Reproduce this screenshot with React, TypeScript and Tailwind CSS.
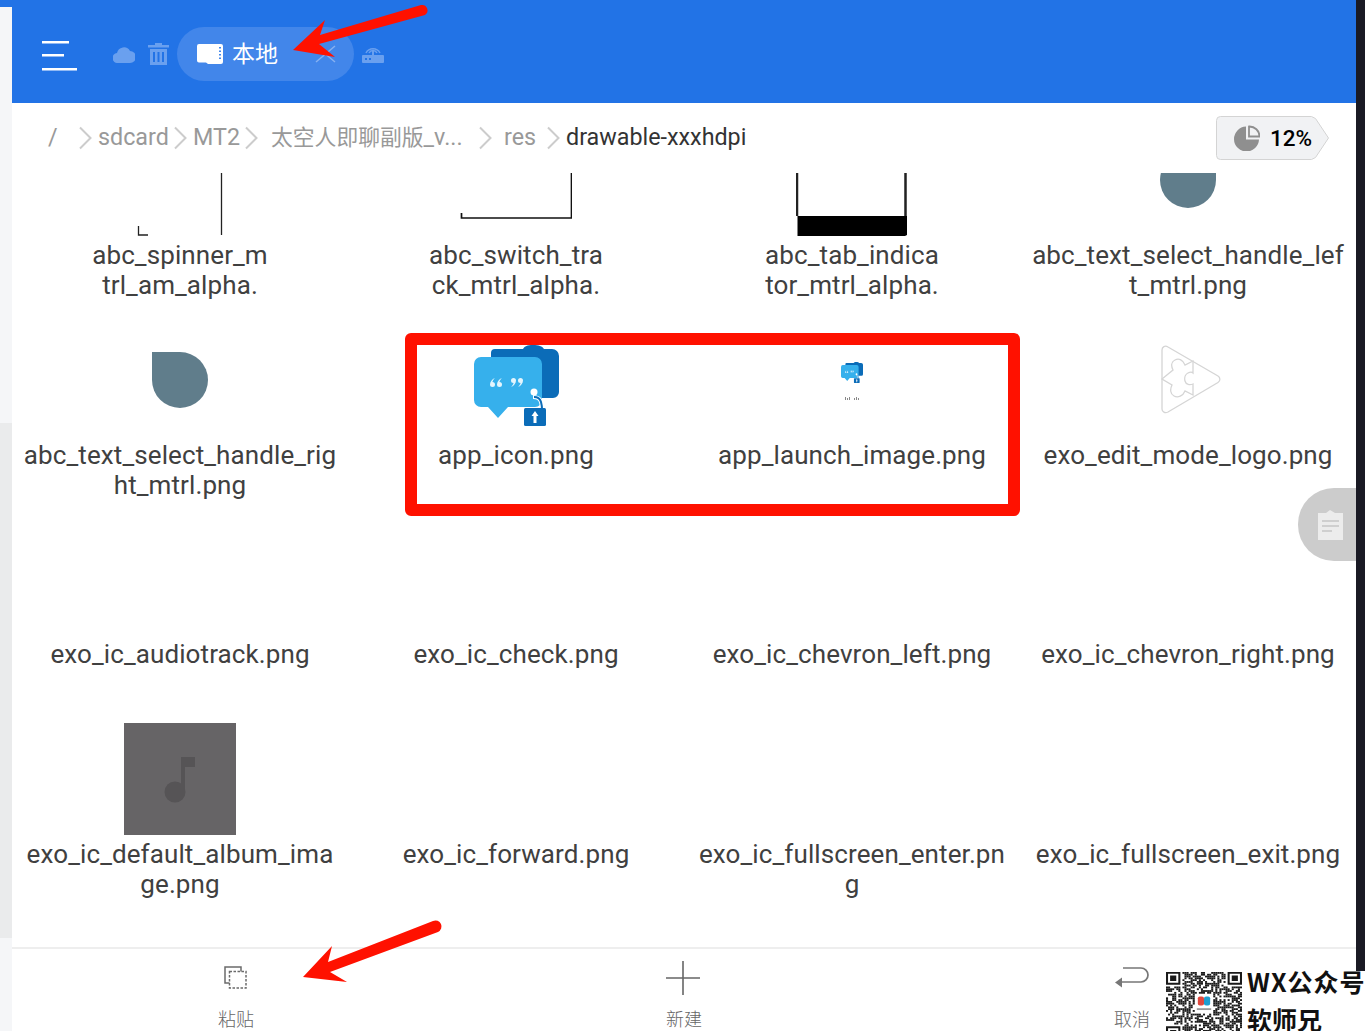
const qrCells = (() => {
  const cells: [number, number][] = [];
  let seed = 73;
  for (let y = 0; y < 37; y++) {
    for (let x = 0; x < 37; x++) {
      seed = (seed * 137 + 41) % 1009;
      const inFinder = (x < 8 && y < 8) || (x > 28 && y < 8) || (x < 8 && y > 28);
      const inLogo = x > 13 && x < 23 && y > 11 && y < 23;
      if (!inFinder && !inLogo && seed % 5 < 3) cells.push([x, y]);
    }
  }
  return cells;
})();

const ChevronRight = ({ className }: { className: string }) => (
  <svg viewBox="0 0 13 24" className={`h-6 w-[13px] shrink-0 ${className}`} fill="none" stroke="#ccc" strokeWidth="2">
    <path d="M1 1.5 11.5 12 1 22.5" />
  </svg>
);

const Quote = ({ x, flip }: { x: number; flip?: boolean }) => (
  <path
    transform={flip ? `translate(${x + 5} 75) rotate(180)` : `translate(${x} 0)`}
    d="M5 33c-3 1-5 4-5 6.500a2.500 2.500 0 1 0 2.500-2.500c0-1 1-2.500 2.500-4Z"
    fill="#e4f5fd"
  />
);

const AppIcon = ({ className }: { className: string }) => (
  <svg viewBox="0 0 85 81" className={className}>
    <path d="M17 8a4 4 0 0 1 4-4h28c2-3 4-4 10-4s9 1 11 4h8a7 7 0 0 1 7 7v36a6 6 0 0 1-6 6H17Z" fill="#0b6cb8" />
    <path d="M7 12h54a7 7 0 0 1 7 7v36a7 7 0 0 1-7 7H34L24 73 14 62H7a7 7 0 0 1-7-7V19a7 7 0 0 1 7-7Z" fill="#36b0ec" />
    <Quote x={16} />
    <Quote x={23} />
    <Quote x={37} flip />
    <Quote x={44} flip />
    <circle cx="60" cy="47" r="3.500" fill="#fff" />
    <path d="M59 52c3 0 7 1 8 5s1 4 1 7" fill="none" stroke="#fff" strokeWidth="4" />
    <path d="M60 52c3 0 6 1 7 5s1 4 1 7" fill="none" stroke="#0b6cb8" strokeWidth="2" />
    <rect x="50" y="63" width="22" height="18" rx="1.5" fill="#0b6cb8" />
    <path d="M61 66 64.500 71h-2v7h-3v-7h-2Z" fill="#fff" />
  </svg>
);

const ExoLogo = () => (
  <svg viewBox="0 0 60 69" className="h-[69px] w-[60px]" fill="none" stroke="#d5d5d5" strokeWidth="1.3">
    <path d="M1 5c0-3 3-5 6-3l50 29c2.500 1.500 2.500 5 0 6.500L7 67c-3 1.500-6 0-6-3Z" />
    <path d="M32 16 24 20c-2-5-6-7-10-5-4 2-4 6-2 10L1 34l10 6c-2 4-2 9 2 11 4 2 9 0 11-5l8 4V39c-3 1-7 1-8-3-1-4 1-7 3-8 2-1 4-1 5 0Z" />
  </svg>
);

const images: Record<string, React.ReactNode> = {
  spinner: (
    <svg viewBox="0 0 112 112" className="size-28" fill="none" stroke="#222" strokeWidth="1.300">
      <path d="M14.500 102v9H24M97.500 0v111" />
    </svg>
  ),
  switch: (
    <svg viewBox="0 0 112 112" className="size-28" fill="none" stroke="#111" strokeWidth="1.700">
      <path d="M1.500 89v5h110V0" />
    </svg>
  ),
  tab: (
    <svg viewBox="1 0 112 112" className="size-28">
      <path d="M2 0v92M110.500 0v92" stroke="#222" strokeWidth="2.500" fill="none" />
      <path d="M2.500 92H112v19l-2 1H2.500Z" fill="#000" />
    </svg>
  ),
  handleLeft: (
    <div className="flex size-28 items-center justify-center">
      <div className="size-14 rounded-full rounded-tr-none bg-[#607d8b]" />
    </div>
  ),
  handleRight: (
    <div className="flex size-28 items-center justify-center">
      <div className="size-14 rounded-full rounded-tl-none bg-[#607d8b]" />
    </div>
  ),
  appIcon: (
    <div className="flex size-28 justify-center pt-[21px]">
      <AppIcon className="h-[81px] w-[85px] shrink-0" />
    </div>
  ),
  launch: (
    <div className="flex size-28 flex-col items-center pt-[38px]">
      <AppIcon className="h-[21px] w-[22px]" />
      <svg viewBox="0 0 14 3" className="mt-[14px] h-[3px] w-[14px]" fill="#888">
        <path d="M0 0h1v3H0ZM2 1h1v2H2ZM4 0h1v3H4ZM9 1h1v2H9ZM11 0h1v3h-1ZM13 1h1v2h-1Z" />
      </svg>
    </div>
  ),
  exoLogo: (
    <div className="flex size-28 justify-center pt-[21px] pl-[6px]">
      <ExoLogo />
    </div>
  ),
  album: (
    <div className="size-28 bg-[#666466]">
      <svg viewBox="0 0 112 112" className="size-28" fill="#565456">
        <circle cx="51" cy="69" r="10.500" />
        <path d="M57 34h14v10h-10v25h-4Z" />
      </svg>
    </div>
  ),
};

// names are wrapped where the app wraps them, in the middle of a word
const files: { name: string; image?: string }[] = [
  { name: "abc_spinner_m\ntrl_am_alpha.", image: "spinner" },
  { name: "abc_switch_tra\nck_mtrl_alpha.", image: "switch" },
  { name: "abc_tab_indica\ntor_mtrl_alpha.", image: "tab" },
  { name: "abc_text_select_handle_lef\nt_mtrl.png", image: "handleLeft" },
  { name: "abc_text_select_handle_rig\nht_mtrl.png", image: "handleRight" },
  { name: "app_icon.png", image: "appIcon" },
  { name: "app_launch_image.png", image: "launch" },
  { name: "exo_edit_mode_logo.png", image: "exoLogo" },
  { name: "exo_ic_audiotrack.png" },
  { name: "exo_ic_check.png" },
  { name: "exo_ic_chevron_left.png" },
  { name: "exo_ic_chevron_right.png" },
  { name: "exo_ic_default_album_ima\nge.png", image: "album" },
  { name: "exo_ic_forward.png" },
  { name: "exo_ic_fullscreen_enter.pn\ng" },
  { name: "exo_ic_fullscreen_exit.png" },
];

const FileCell = ({ name, image }: { name: string; image?: string }) => (
  <div className="flex h-[199.5px] flex-col items-center">
    <div className="h-28 w-28 shrink-0">{image && images[image]}</div>
    <div className="mt-[4px] w-[330px] text-center text-[26px] leading-[30px] font-normal tracking-[0.1px] whitespace-pre-line text-[#404040]">
      {name}
    </div>
  </div>
);

const FooterAction = ({ label, icon }: { label: string; icon: React.ReactNode }) => (
  <div className="flex flex-col items-center">
    <div className="flex h-[57px] items-center">{icon}</div>
    <span className="mt-[2px] text-[18px] leading-[24px] font-light text-[#666]">{label}</span>
  </div>
);

export default function App() {
  return (
    <div
      className="relative flex h-[1031px] w-[1365px] overflow-hidden bg-white"
      style={{ fontFamily: 'Roboto, "Noto Sans CJK SC", sans-serif' }}
    >
      {/* strip left of the app */}
      <div className="flex w-3 shrink-0 flex-col bg-[#f5f6f8]">
        <div className="h-[7px] bg-[#2273e6]" />
        <div className="h-[416px]" />
        <div className="h-[515px] bg-[#eaebec]" />
      </div>

      <div className="flex w-[1344px] shrink-0 flex-col">
        <header className="flex h-[103px] shrink-0 items-center bg-[#2273e6] pt-[5px]">
          <svg viewBox="0 0 35 30" className="mt-[3px] ml-[30px] h-[30px] w-[35px]" fill="#fff">
            <path d="M0 0h27v2.500H0ZM0 13h22v2.500H0ZM0 27h35v2.500H0Z" />
          </svg>
          <svg viewBox="0 0 22 18" className="ml-9 h-[18px] w-[22px]" fill="#6aa0ef">
            <path d="M5 18a5 5 0 0 1-1-10 7 7 0 0 1 13-2 6 6 0 0 1 0 12Z" />
          </svg>
          <svg viewBox="0 0 21 22" className="ml-[13px] h-[22px] w-[21px]" fill="#6aa0ef">
            <path d="M7 0h7v2h7v2.500H0V2h7ZM2 6h17v16H2Zm3 3v10h2V9Zm4.500 0v10h2V9ZM14 9v10h2V9Z" />
          </svg>
          <div className="ml-2 flex h-[54px] w-[177px] items-center rounded-full bg-[#4286ea] pl-5">
            <svg viewBox="0 0 26 20" className="h-5 w-[26px]" fill="#fff">
              <path d="M2 0h22a2 2 0 0 1 2 2v16a2 2 0 0 1-2 2H11l-2-1.500H2a2 2 0 0 1-2-2V2a2 2 0 0 1 2-2Z" />
              <path d="M22 3h2v1.500h-2Zm0 3.500h2V8h-2Zm0 3.500h2v1.500h-2Zm0 3.500h2V15h-2Z" fill="#4286ea" />
            </svg>
            <span className="ml-[9px] text-[23px] leading-none font-normal text-white">本地</span>
            <svg viewBox="0 0 21 18" className="ml-[37px] h-[18px] w-[21px]" fill="none" stroke="#86b0f0" strokeWidth="1.500">
              <path d="M1 1 20 17M20 1 1 17" />
            </svg>
          </div>
          <svg viewBox="0 0 22 18" className="ml-2 h-[18px] w-[22px]" fill="none" stroke="#6aa0ef" strokeWidth="1.500">
            <path d="M4 8a8 8 0 0 1 14 0M7 8a4.500 4.500 0 0 1 8 0" />
            <path d="M10 5h2v5h-2Z" fill="#6aa0ef" stroke="none" />
            <path d="M1 10h20a1 1 0 0 1 1 1v6a1 1 0 0 1-1 1H1a1 1 0 0 1-1-1v-6a1 1 0 0 1 1-1Z" fill="#6aa0ef" stroke="none" />
            <path d="M3 13h2v2H3Zm4 0h2v2H7Z" fill="#2273e6" stroke="none" />
          </svg>
        </header>

        <div className="flex h-[70px] shrink-0 items-center text-[23.3px] leading-none font-normal text-[#999]">
          <span className="ml-[36px] w-[31px]">/</span>
          <ChevronRight className="" />
          <span className="ml-[6px] w-[70px]">sdcard</span>
          <ChevronRight className="ml-[6px]" />
          <span className="ml-[6px] w-[47px]">MT2</span>
          <ChevronRight className="ml-[5px]" />
          <span className="ml-[13px] w-[196px] whitespace-nowrap">
            <span className="text-[21.8px]">太空人即聊副版</span>_v...
          </span>
          <ChevronRight className="ml-3" />
          <span className="ml-3 w-[31px]">res</span>
          <ChevronRight className="ml-3" />
          <span className="ml-[6px] text-[#333]">drawable-xxxhdpi</span>
          <div className="relative mr-[27px] ml-auto flex h-[44px] w-[113px] items-center pl-[18px]">
            <svg viewBox="0 0 113 44" className="absolute inset-0 h-[44px] w-[113px]">
              <path d="M4.500.5h91l4 2 13 19.500-13 19.500-4 2h-91a4 4 0 0 1-4-4V4.500a4 4 0 0 1 4-4Z" fill="#f1f2f4" stroke="#d4d4d4" />
            </svg>
            <svg viewBox="0 0 26 26" className="relative h-[26px] w-[26px]">
              <path d="M12 1.500v13h13A12.500 12.500 0 1 1 12 1.500Z" fill="#8f8f8f" />
              <path d="M15 1.500A10 10 0 0 1 25.500 11.500H15Z" fill="none" stroke="#8f8f8f" strokeWidth="1.800" />
            </svg>
            <span className="relative ml-[10px] text-[22.5px] leading-none font-medium text-black">12%</span>
          </div>
        </div>

        {/* the file list is scrolled, its first row is cut off at the top */}
        <div className="min-h-0 flex-1 overflow-hidden">
          <div className="-mt-[49px] grid grid-cols-4">
            {files.map((file) => (
              <FileCell key={file.name} name={file.name} image={file.image} />
            ))}
          </div>
        </div>

        <footer className="grid h-[84px] shrink-0 grid-cols-3 border-t-2 border-[#eeeeee]">
          <FooterAction
            label="粘贴"
            icon={
              <svg viewBox="0 0 23 23" className="-ml-px h-[23px] w-[23px]" fill="none" stroke="#6b6b6b" strokeWidth="1.500">
                <path d="M5.500 17H1V1h16v4.500" />
                <path d="M5.500 5.500H22V22H5.500Z" strokeDasharray="2.500 1.500" />
              </svg>
            }
          />
          <FooterAction
            label="新建"
            icon={
              <svg viewBox="0 0 34 34" className="-ml-[2px] h-[34px] w-[34px]" fill="none" stroke="#666" strokeWidth="1.600">
                <path d="M17 0v34M0 17h34" />
              </svg>
            }
          />
          <FooterAction
            label="取消"
            icon={
              <svg viewBox="0 0 34 21" className="h-[21px] w-[34px]" fill="none" stroke="#777" strokeWidth="1.700">
                <path d="M8 1h18a7 7 0 0 1 0 14H6" />
                <path d="M0 15.500 7 10.500v10Z" fill="#777" stroke="none" />
              </svg>
            }
          />
        </footer>
      </div>

      <div className="h-[971px] w-[9px] shrink-0 bg-[#1a1a24]" />

      {/* floating clipboard button */}
      <div className="absolute top-[488px] left-[1298px] flex h-[73px] w-[58px] items-center rounded-l-[36px] bg-[#cccccc] pl-[20px]">
        <svg viewBox="0 0 25 30" className="h-[30px] w-[25px]">
          <path d="M0 3h8l4-3 5 3h8v27H0Z" fill="#ececec" />
          <path d="M4 10h17v2H4Zm0 5h17v2H4Zm0 5h10v2H4Z" fill="#cfcfcf" />
        </svg>
      </div>

      {/* annotations put on the screenshot */}
      <div className="pointer-events-none absolute top-[333px] left-[405px] h-[183px] w-[615px] rounded-md border-12 border-[#ff1100]" />
      <svg viewBox="0 0 1365 1031" className="pointer-events-none absolute inset-0 h-[1031px] w-[1365px]" fill="#ff1100">
        <path d="M293 50 325 20 320 35 421 5a5.500 5.500 0 0 1 4 10L319 44 335 57Z" />
        <path d="M303 977 332 946 328 962 433 921a5.500 5.500 0 0 1 5 11L330 972 347 982Z" />
      </svg>

      {/* watermark */}
      <div className="absolute top-[971px] left-[1166px] flex h-[60px] w-[199px] bg-white">
        <div className="h-[60px] w-[76px] shrink-0 overflow-hidden">
          <svg viewBox="0 0 37 37" preserveAspectRatio="none" className="mt-px h-[67px] w-[76px]" fill="#1a1a1a">
            {qrCells.map(([x, y]) => (
              <rect key={`${x}-${y}`} x={x} y={y} width="1" height="1" />
            ))}
            <path d="M0 0h7v7H0Zm1 1v5h5V1Zm1 1h3v3H2ZM30 0h7v7h-7Zm1 1v5h5V1Zm1 1h3v3h-3ZM0 30h7v7H0Zm1 1v5h5v-5Zm1 1h3v3H2Z" fillRule="evenodd" />
            <rect x="15.500" y="13.500" width="3" height="5" rx="1" fill="#e0483e" />
            <rect x="18.500" y="13.500" width="3" height="5" rx="1" fill="#1e9fd0" />
            <rect x="15" y="20" width="7" height="1" fill="#999" />
          </svg>
        </div>
        <div
          className="ml-[5px] flex flex-col whitespace-nowrap text-[#111]"
          style={{ fontFamily: '"Noto Sans CJK SC", sans-serif' }}
        >
          <span className="h-[36px] text-[25px] leading-[20px] font-bold tracking-[1px]">WX公众号</span>
          <span className="text-[25px] leading-[24px] font-bold">软师兄</span>
        </div>
      </div>
    </div>
  );
}
